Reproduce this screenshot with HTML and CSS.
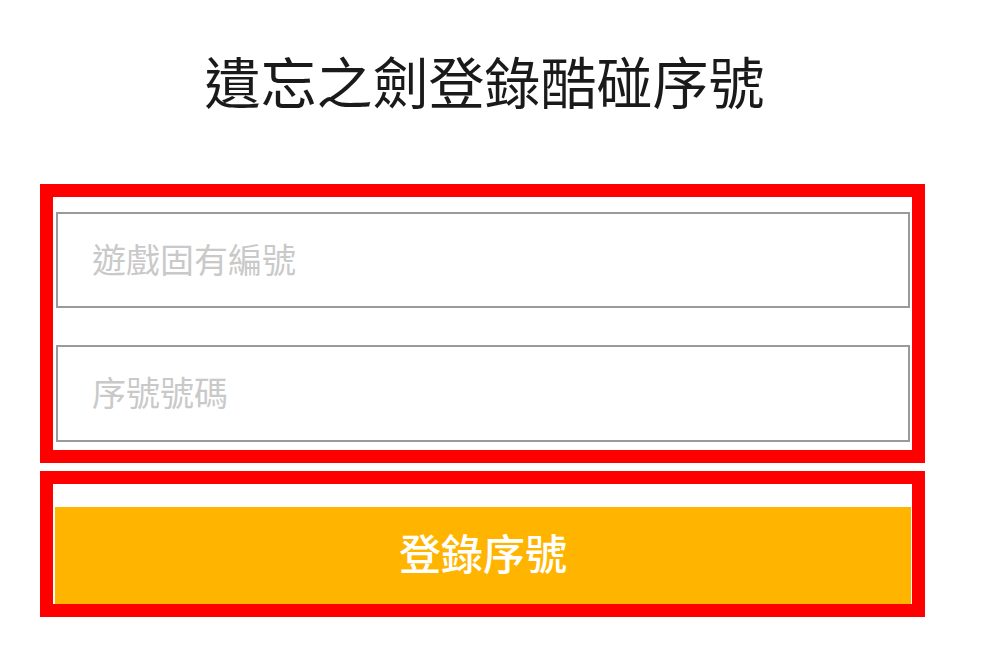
FILE: index.html
```html
<!DOCTYPE html>
<html lang="zh-Hant">
<head>
<meta charset="utf-8">
<title>遺忘之劍登錄酷碰序號</title>
<link rel="stylesheet" href="styles.css">
</head>
<body>
<div class="page">
  <h1 class="title">遺忘之劍登錄酷碰序號</h1>
  <div class="box fields">
    <input class="field field-first" type="text" placeholder="遊戲固有編號">
    <input class="field field-second" type="text" placeholder="序號號碼">
  </div>
  <div class="box actions">
    <button class="submit" type="button">登錄序號</button>
  </div>
</div>
</body>
</html>
```
FILE: styles.css
```css
html, body {
  margin: 0;
  padding: 0;
  background: #ffffff;
}
body {
  font-family: "Noto Sans CJK TC", "Noto Sans", sans-serif;
}
.page {
  width: 885px;
  margin-left: 40px;
  padding-top: 49px;
  display: flex;
  flex-direction: column;
}
.title {
  margin: 0;
  height: 135px;
  font-size: 56px;
  line-height: 62px;
  font-weight: 400;
  color: #1a1a1a;
  text-align: center;
  padding-left: 4px;
}
.box {
  box-sizing: border-box;
  border: 13px solid #ff0000;
  display: flex;
  flex-direction: column;
}
.fields {
  height: 279px;
  padding: 15px 2px 0 3px;
}
.field {
  box-sizing: border-box;
  width: 100%;
  margin: 0;
  border: 2px solid #9a9a9a;
  background: #ffffff;
  font-family: inherit;
  font-size: 34px;
  color: #333;
  padding: 0 0 4px 34px;
  outline: none;
}
.field::placeholder {
  color: #c9c9c9;
}
.field-first {
  height: 96px;
}
.field-second {
  height: 97px;
  margin-top: 37px;
}
.actions {
  margin-top: 8px;
  height: 146px;
  padding: 23px 1px 0 2px;
}
.submit {
  box-sizing: border-box;
  width: 100%;
  height: 98px;
  margin: 0;
  border: 0;
  background: #ffb400;
  color: #ffffff;
  font-family: inherit;
  font-size: 42px;
  font-weight: 500;
  padding: 0 0 8px 0;
}
```
